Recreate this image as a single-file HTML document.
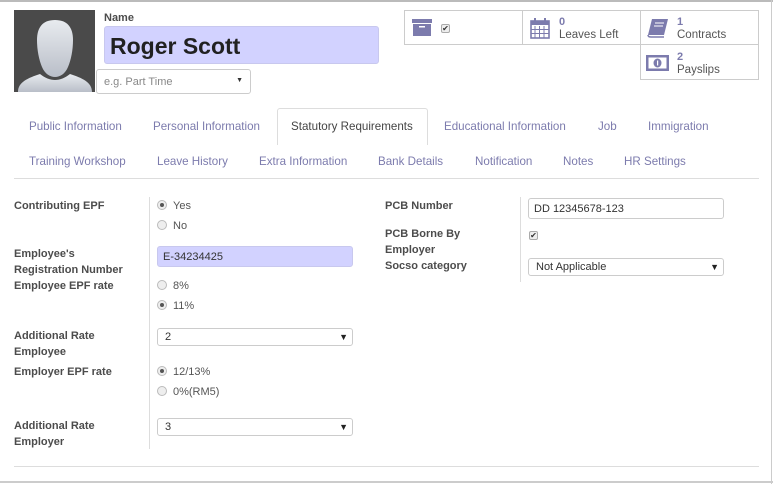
<!DOCTYPE html>
<html><head><meta charset="utf-8"><style>
*{box-sizing:border-box;margin:0;padding:0}
body{width:773px;height:484px;background:#fff;font-family:"Liberation Sans",sans-serif;position:relative;overflow:hidden;color:#4c4c4c}
.a{position:absolute}
.lbl{position:absolute;font-size:11px;font-weight:bold;color:#4c4c4c;line-height:16px}
.tab{position:absolute;font-size:11.6px;color:#7c7bad;white-space:nowrap}
.radio{position:absolute;font-size:11px;color:#555;line-height:13px}
.radio i{display:inline-block;width:10px;height:10px;border:1px solid #bbb;border-radius:50%;background:#eee;vertical-align:-1px;margin-right:6px;position:relative}
.radio i.on::after{content:"";position:absolute;left:2px;top:2px;width:4px;height:4px;border-radius:50%;background:#555}
.sel{position:absolute;height:18px;border:1px solid #ccc;border-radius:3px;font-size:11px;padding-left:7px;line-height:17px;color:#333;background:#fff}
.sel::after{content:"▼";position:absolute;right:4px;top:0;font-size:9px;color:#222}
.cb{position:absolute;width:9px;height:9px;border:1px solid #aaa;border-radius:2px;background:#eee;font-size:8px;line-height:7px;text-align:center;color:#333}
.btn{position:absolute;border:1px solid #ccc;font-size:11px;color:#555;line-height:13px}
.btn b{color:#7c7bad;font-size:11px}
</style></head><body>
<div class="a" style="left:0;top:0;width:773px;height:2px;background:#bbb"></div>
<div class="a" style="right:1px;top:0;width:1px;height:484px;background:#ccc"></div>
<div class="a" style="left:0;top:481px;width:773px;height:2px;background:#ccc"></div>

<div class="a" style="left:14px;top:10px;width:81px;height:82px;background:#4a4a4a;overflow:hidden">
<svg width="81" height="82" viewBox="0 0 81 82"><defs><linearGradient id="g" x1="0" y1="0" x2="0" y2="1"><stop offset="0" stop-color="#e8ebef"/><stop offset="1" stop-color="#b9bec8"/></linearGradient></defs>
<path d="M41 10c-12 0-18 7-18 20 0 10 2 20 5 27 3 7 8 10 13 10s10-3 13-10c3-7 5-17 5-27 0-13-6-20-18-20z" fill="url(#g)"/>
<path d="M4 82c0-10 10-14 22-18 5 4 10 6 15 6s10-2 15-6c12 4 22 8 22 18z" fill="url(#g)"/></svg></div>

<div class="a" style="left:104px;top:12px;font-size:11px;font-weight:bold;color:#4c4c4c">Name</div>
<div class="a" style="left:104px;top:26px;width:275px;height:38px;background:#d2d2ff;border:1px solid #c8c8ee;border-radius:3px;font-size:23px;font-weight:bold;color:#212121;padding:6px 0 0 5px">Roger Scott</div>
<div class="a" style="left:96px;top:69px;width:155px;height:25px;border:1px solid #ccc;border-radius:3px;font-size:11px;color:#888;padding:6px 0 0 7px">e.g. Part Time<span style="position:absolute;right:7px;top:7px;color:#333;font-size:7px">▼</span></div>

<div class="btn" style="left:404px;top:10px;width:119px;height:35px">
<svg class="a" style="left:7px;top:7px" width="20" height="20" viewBox="0 0 20 20"><rect x="0" y="1" width="20" height="4" fill="#7c7bad"/><rect x="1" y="6" width="18" height="12" fill="#7c7bad"/><rect x="7" y="8" width="6" height="1.5" fill="#fff"/></svg>
<div class="cb" style="left:36px;top:13px">✔</div></div>
<div class="btn" style="left:522px;top:10px;width:119px;height:35px">
<svg class="a" style="left:7px;top:6px" width="20" height="22" viewBox="0 0 20 22"><rect x="1" y="4" width="18" height="17" fill="none" stroke="#7c7bad" stroke-width="1.6"/><rect x="1" y="4" width="18" height="4" fill="#7c7bad"/><path d="M5 9v12M9.5 9v12M14 9v12M1 12.5h18M1 16.5h18" stroke="#7c7bad" stroke-width="1"/><rect x="4" y="1" width="2" height="5" fill="#7c7bad"/><rect x="14" y="1" width="2" height="5" fill="#7c7bad"/></svg>
<div class="a" style="left:36px;top:5px;font-size:11.5px"><b>0</b><br>Leaves Left</div></div>
<div class="btn" style="left:640px;top:10px;width:119px;height:35px">
<svg class="a" style="left:6px;top:7px" width="22" height="20" viewBox="0 0 22 20"><path d="M5 1h16l-4 16H1z" fill="#7c7bad"/><path d="M1 17c0 2 2 2 3 2h13" stroke="#7c7bad" stroke-width="1.5" fill="none"/><path d="M8 5h9M7 8h9" stroke="#fff" stroke-width="1"/></svg>
<div class="a" style="left:36px;top:5px;font-size:11.5px"><b>1</b><br>Contracts</div></div>
<div class="btn" style="left:640px;top:44px;width:119px;height:36px">
<svg class="a" style="left:5px;top:10px" width="23" height="16" viewBox="0 0 23 16"><rect x="0" y="0" width="23" height="16" fill="#7c7bad"/><rect x="2.5" y="2.5" width="18" height="11" fill="#fff"/><ellipse cx="11.5" cy="8" rx="4" ry="4.5" fill="#7c7bad"/><rect x="11" y="5.5" width="1.2" height="5" fill="#fff"/></svg>
<div class="a" style="left:36px;top:6px;font-size:11.5px"><b>2</b><br>Payslips</div></div>

<div class="a" style="left:277px;top:108px;width:151px;height:37px;border:1px solid #ddd;border-bottom:none;border-radius:3px 3px 0 0;background:#fff"></div>
<div class="tab" style="left:29px;top:120px">Public Information</div>
<div class="tab" style="left:153px;top:120px">Personal Information</div>
<div class="tab" style="left:291px;top:120px;color:#444">Statutory Requirements</div>
<div class="tab" style="left:444px;top:120px">Educational Information</div>
<div class="tab" style="left:598px;top:120px">Job</div>
<div class="tab" style="left:648px;top:120px">Immigration</div>
<div class="tab" style="left:29px;top:155px">Training Workshop</div>
<div class="tab" style="left:157px;top:155px">Leave History</div>
<div class="tab" style="left:259px;top:155px">Extra Information</div>
<div class="tab" style="left:378px;top:155px">Bank Details</div>
<div class="tab" style="left:475px;top:155px">Notification</div>
<div class="tab" style="left:563px;top:155px">Notes</div>
<div class="tab" style="left:624px;top:155px">HR Settings</div>
<div class="a" style="left:14px;top:178px;width:745px;height:1px;background:#ddd"></div>

<div class="a" style="left:149px;top:197px;width:1px;height:252px;background:#ddd"></div>
<div class="a" style="left:520px;top:197px;width:1px;height:85px;background:#ddd"></div>

<div class="lbl" style="left:14px;top:198px">Contributing EPF</div>
<div class="radio" style="left:157px;top:200px"><i class="on"></i>Yes</div>
<div class="radio" style="left:157px;top:220px"><i></i>No</div>
<div class="lbl" style="left:14px;top:246px">Employee's<br>Registration Number</div>
<div class="a" style="left:157px;top:246px;width:196px;height:21px;background:#d2d2ff;border:1px solid #c8c8ee;border-radius:3px;font-size:11px;color:#333;padding:4px 0 0 5px">E-34234425</div>
<div class="lbl" style="left:14px;top:278px">Employee EPF rate</div>
<div class="radio" style="left:157px;top:280px"><i></i>8%</div>
<div class="radio" style="left:157px;top:300px"><i class="on"></i>11%</div>
<div class="lbl" style="left:14px;top:328px">Additional Rate<br>Employee</div>
<div class="sel" style="left:157px;top:328px;width:196px">2</div>
<div class="lbl" style="left:14px;top:364px">Employer EPF rate</div>
<div class="radio" style="left:157px;top:366px"><i class="on"></i>12/13%</div>
<div class="radio" style="left:157px;top:386px"><i></i>0%(RM5)</div>
<div class="lbl" style="left:14px;top:418px">Additional Rate<br>Employer</div>
<div class="sel" style="left:157px;top:418px;width:196px">3</div>

<div class="lbl" style="left:385px;top:198px">PCB Number</div>
<div class="a" style="left:528px;top:198px;width:196px;height:21px;border:1px solid #ccc;border-radius:3px;font-size:11px;color:#333;padding:4px 0 0 5px">DD 12345678-123</div>
<div class="lbl" style="left:385px;top:226px">PCB Borne By<br>Employer</div>
<div class="cb" style="left:529px;top:231px">✔</div>
<div class="lbl" style="left:385px;top:258px">Socso category</div>
<div class="sel" style="left:528px;top:258px;width:196px">Not Applicable</div>

<div class="a" style="left:14px;top:466px;width:745px;height:1px;background:#ddd"></div>
</body></html>
